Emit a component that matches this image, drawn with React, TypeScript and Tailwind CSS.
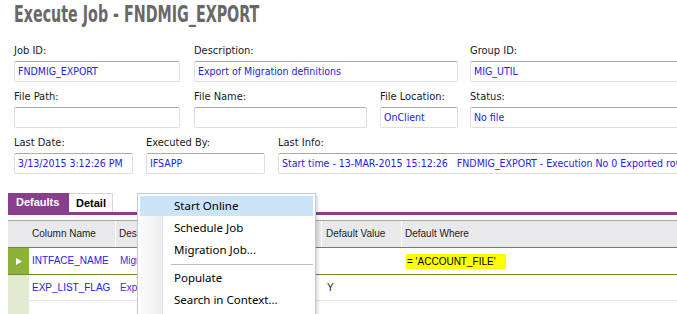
import React from 'react';

const labelCls = "h-[16px] leading-[16px] text-[11px] text-[#1a1a1a] whitespace-nowrap";
const boxCls =
  "mt-[2px] h-[21px] border border-[#dcdfe3] border-t-[#a9abb0] rounded-[2px] bg-white pl-[3px] text-[10.5px] leading-[19px] text-[#2222e6] whitespace-nowrap overflow-hidden";

const Field: React.FC<{ label: string; value?: string; className: string }> = ({ label, value, className }) => (
  <div className={className}>
    <div className={labelCls}>{label}</div>
    <div className={boxCls}>{value}</div>
  </div>
);

const menuItems = ['Start Online', 'Schedule Job', 'Migration Job...'];
const menuItems2 = ['Populate', 'Search in Context...'];

const App: React.FC = () => {
  return (
    <div
      className="relative w-[677px] h-[314px] overflow-hidden bg-white"
      style={{ fontFamily: '"DejaVu Sans Condensed", "DejaVu Sans", sans-serif' }}
    >
      {/* Title */}
      <div className="pl-[14px] h-[28px] leading-[28px] whitespace-nowrap">
        <span className="inline-block origin-left scale-x-[0.69] text-[23px] font-bold text-[#686868]">
          Execute Job - FNDMIG_EXPORT
        </span>
      </div>

      {/* Form fields */}
      <div className="mt-[15px] pl-[14px] flex flex-col gap-[7px]">
        <div className="flex">
          <Field className="w-[166px] shrink-0" label="Job ID:" value="FNDMIG_EXPORT" />
          <Field className="ml-[14px] w-[264px] shrink-0" label="Description:" value="Export of Migration definitions" />
          <Field className="ml-[12px] w-[260px] shrink-0" label="Group ID:" value="MIG_UTIL" />
        </div>
        <div className="flex">
          <Field className="w-[166px] shrink-0" label="File Path:" />
          <Field className="ml-[14px] w-[173px] shrink-0" label="File Name:" />
          <Field className="ml-[13px] w-[78px] shrink-0" label="File Location:" value="OnClient" />
          <Field className="ml-[12px] w-[260px] shrink-0" label="Status:" value="No file" />
        </div>
        <div className="flex">
          <Field className="w-[119px] shrink-0" label="Last Date:" value="3/13/2015 3:12:26 PM" />
          <Field className="ml-[13px] w-[119px] shrink-0" label="Executed By:" value="IFSAPP" />
          <Field
            className="ml-[13px] w-[460px] shrink-0"
            label="Last Info:"
            value={'Start time - 13-MAR-2015 15:12:26\u00a0\u00a0\u00a0FNDMIG_EXPORT - Execution No 0 Exported rows'}
          />
        </div>
      </div>

      {/* Tabs */}
      <div
        className="mt-[19px] ml-[8px] flex flex-col"
        style={{ fontFamily: '"Liberation Sans", Arial, sans-serif' }}
      >
        <div className="flex h-[19px]">
          <div className="w-[61px] bg-[#8a3f8e] text-white font-bold text-[11px] leading-[19px] pl-[8px]">Defaults</div>
          <div className="w-[44px] bg-white border-t border-r border-[#d8d8d8] text-black font-bold text-[11px] leading-[18px] pl-[7px]">
            Detail
          </div>
        </div>
        <div className="h-[3px] bg-[#8a3f8e]" />

        {/* Grid */}
        <div className="mt-[5px] border-t border-[#a8a8a8] text-[10px]">
          <div className="flex h-[26px] bg-[#e9e9ec] text-[#222] leading-[26px]">
            <div className="w-[21px] shrink-0" />
            <div className="w-[87px] shrink-0 pl-[3px] border-r border-white">Column Name</div>
            <div className="w-[206px] shrink-0 pl-[3px] border-r border-white">Description</div>
            <div className="w-[80px] shrink-0 pl-[4px] border-r border-white">Default Value</div>
            <div className="flex-1 pl-[3px]">Default Where</div>
          </div>
          <div className="flex h-[27px] border-t border-[#6e8c22] leading-[26px]">
            <div className="w-[21px] shrink-0 bg-[#8db23a] flex items-center justify-center">
              <svg width="6" height="7" viewBox="0 0 6 7">
                <path d="M0 0 L6 3.5 L0 7 Z" fill="#ffffff" />
              </svg>
            </div>
            <div className="w-[88px] shrink-0 pl-[3px] text-[#2222e6]">INTFACE_NAME</div>
            <div className="w-[206px] shrink-0 pl-[3px] text-[#4a2ae0]">Migration definitions</div>
            <div className="w-[80px] shrink-0" />
            <div className="flex-1 pl-[3px] flex items-center">
              <span className="bg-[#ffff00] text-black h-[15px] leading-[15px] w-[100px] pl-[1px]">= 'ACCOUNT_FILE'</span>
            </div>
          </div>
          <div className="flex h-[27px] border-t border-b border-t-[#6e8c22] border-b-[#e4e4e4] leading-[25px]">
            <div className="w-[21px] shrink-0 bg-[#e2ebd0]" />
            <div className="w-[88px] shrink-0 pl-[3px] text-[#2222e6]">EXP_LIST_FLAG</div>
            <div className="w-[206px] shrink-0 pl-[3px] text-[#4a2ae0]">Export list flag</div>
            <div className="w-[80px] shrink-0 pl-[4px] text-[#222]">Y</div>
            <div className="flex-1" />
          </div>
          <div className="flex h-[20px]">
            <div className="w-[21px] shrink-0 bg-[#e2ebd0]" />
          </div>
        </div>
      </div>

      {/* Context menu */}
      <div
        className="absolute left-[137px] top-[193px] w-[179px] h-[130px] bg-white border border-[#c8c8c8] shadow-[2px_2px_3px_rgba(0,0,0,0.15)] p-[1px] text-[11.5px] text-black"
        style={{ fontFamily: '"Noto Sans", "Open Sans", sans-serif' }}
      >
        <div className="absolute left-[2px] top-[2px] bottom-0 w-[23px] bg-gradient-to-r from-[#fbfbfb] to-[#eeeeee] border-r border-[#e6e6e6]" />
        <div className="relative flex flex-col">
          {menuItems.map((m, i) => (
            <div key={m} className="h-[22px] px-[1px] py-[1px]">
              <div
                className={
                  i === 0
                    ? 'h-[20px] bg-[#cce4f7] pl-[34px] leading-[20px] whitespace-nowrap'
                    : 'h-[20px] pl-[34px] leading-[20px] whitespace-nowrap'
                }
              >
                {m}
              </div>
            </div>
          ))}
          <div className="h-[6px] flex items-center pl-[32px] pr-[1px]">
            <div className="h-px w-full bg-[#bdbdbd]" />
          </div>
          {menuItems2.map((m) => (
            <div key={m} className="h-[22px] px-[1px] py-[1px]">
              <div className="h-[20px] pl-[34px] leading-[20px] whitespace-nowrap">{m}</div>
            </div>
          ))}
        </div>
      </div>
    </div>
  );
};

export default App;
